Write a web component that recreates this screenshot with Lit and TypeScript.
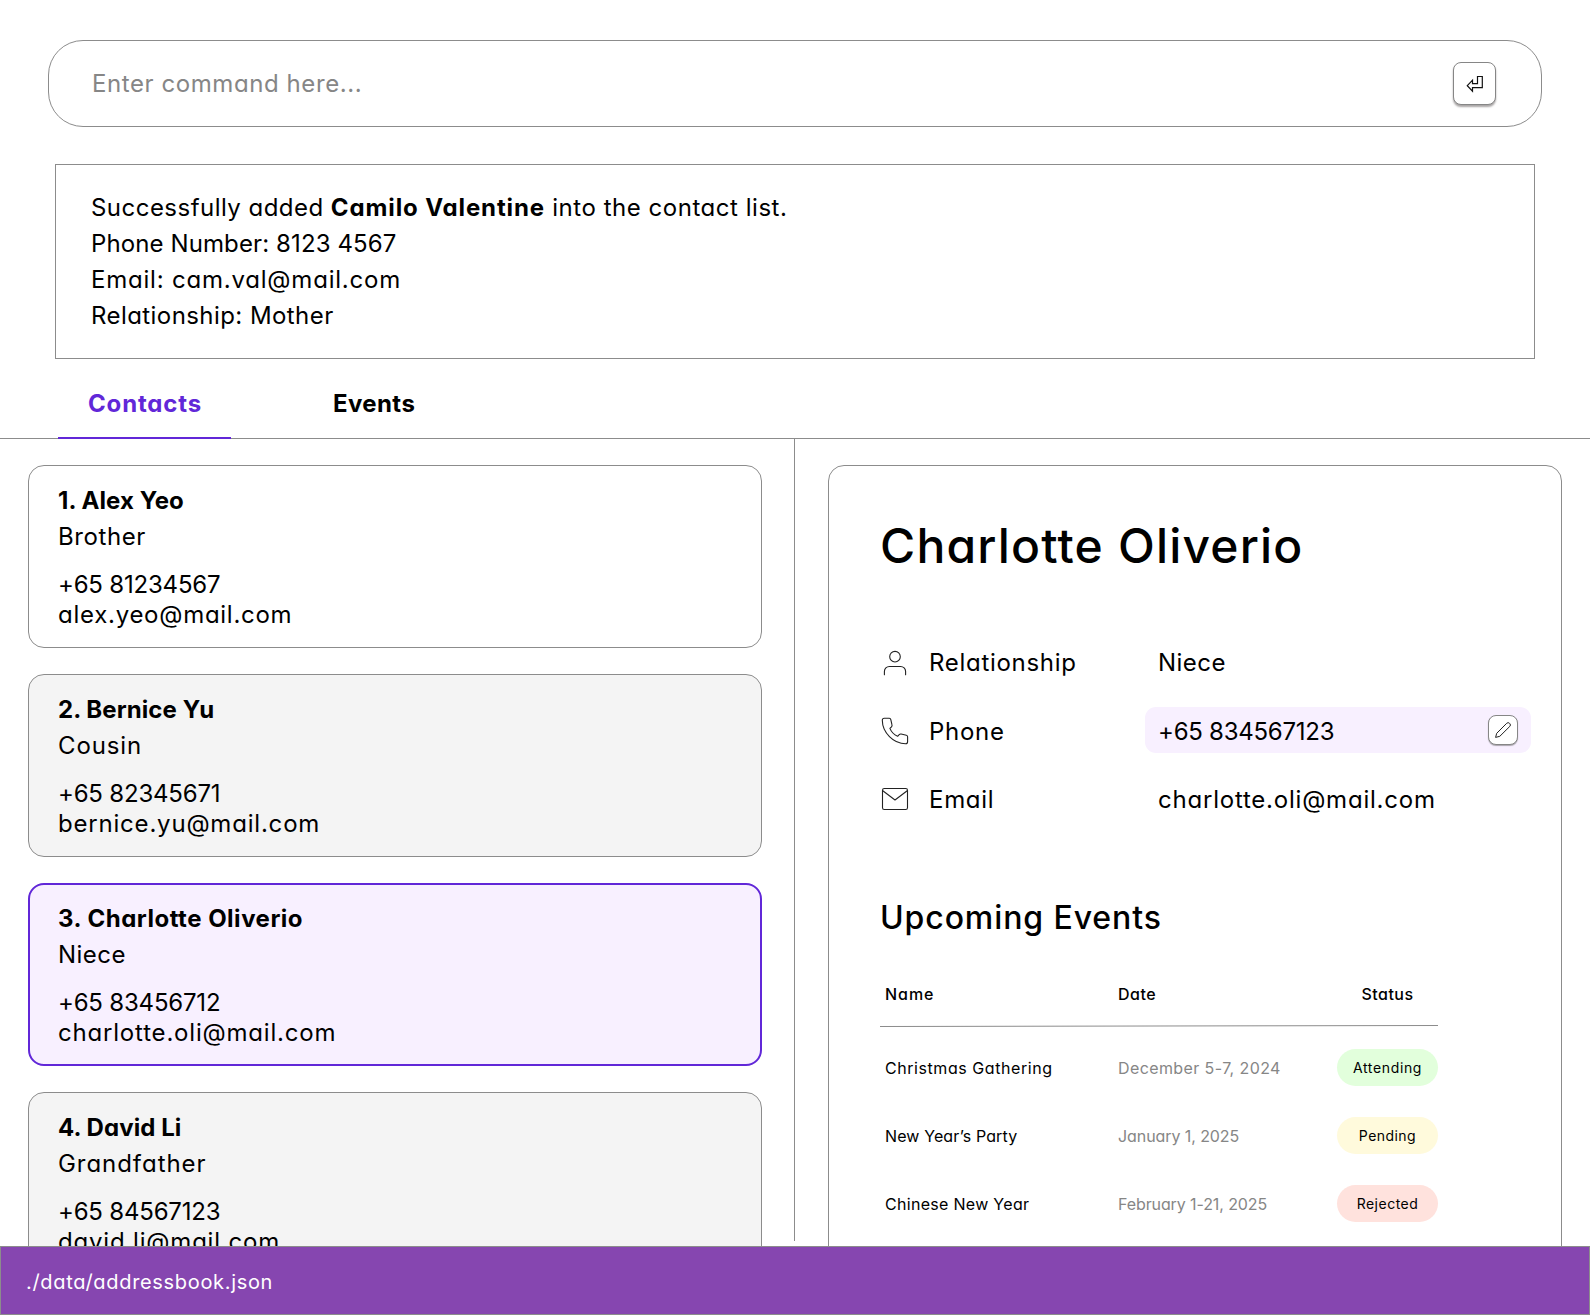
import { LitElement, html, css, svg, TemplateResult } from "lit";
import { customElement, property, state } from "lit/decorators.js";
import { classMap } from "lit/directives/class-map.js";
import { styleMap } from "lit/directives/style-map.js";

/** A run of text together with its letter-spacing in pixels. */
type Run = [text: string, tracking: number];

interface Contact {
  name: Run;
  relation: Run;
  phone: Run;
  email: Run;
}

interface EventRow {
  name: Run;
  date: Run;
  status: Run;
  tone: "attending" | "pending" | "rejected";
}

const run = ([text, tracking]: Run) =>
  html`<span style=${styleMap({ letterSpacing: `${tracking}px` })}>${text}</span>`;

const CONTACTS: Contact[] = [
  {
    name: ["1. Alex Yeo", 0.07],
    relation: ["Brother", 0.59],
    phone: ["+65 81234567", -0.2],
    email: ["alex.yeo@mail.com", 0.73],
  },
  {
    name: ["2. Bernice Yu", 0.08],
    relation: ["Cousin", 0.86],
    phone: ["+65 82345671", -0.2],
    email: ["bernice.yu@mail.com", 0.8],
  },
  {
    name: ["3. Charlotte Oliverio", 0.5],
    relation: ["Niece", 0.48],
    phone: ["+65 83456712", -0.2],
    email: ["charlotte.oli@mail.com", 0.81],
  },
  {
    name: ["4. David Li", 0.07],
    relation: ["Grandfather", 0.95],
    phone: ["+65 84567123", -0.2],
    email: ["david.li@mail.com", 0.8],
  },
];

const EVENTS: EventRow[] = [
  {
    name: ["Christmas Gathering", 0.56],
    date: ["December 5-7, 2024", 0.4],
    status: ["Attending", 0.65],
    tone: "attending",
  },
  {
    name: ["New Year’s Party", 0.12],
    date: ["January 1, 2025", -0.08],
    status: ["Pending", 0.45],
    tone: "pending",
  },
  {
    name: ["Chinese New Year", 0.3],
    date: ["February 1-21, 2025", -0.1],
    status: ["Rejected", 0.5],
    tone: "rejected",
  },
];

const ICONS: Record<string, TemplateResult> = {
  person: svg`
    <circle cx="16" cy="9.7" r="5.3"></circle>
    <path d="M5.4 27.8v-3.3a5 5 0 0 1 5-5h11.2a5 5 0 0 1 5 5v3.3"></path>`,
  phone: svg`
    <path d="M5.3 3.3h5a1.6 1.6 0 0 1 1.5 1.3l1.2 5.3a2 2 0 0 1-.5 1.9l-1.6 1.6c1.2 3 4.6 6.5 7.7 7.9l1.6-1.7a2 2 0 0 1 1.9-.6l5.2 1.2a1.7 1.7 0 0 1 1.3 1.6v5a2 2 0 0 1-2 2C14.5 28.8 3.4 17.6 3.3 5.3a2 2 0 0 1 2-2z"></path>`,
  mail: svg`
    <rect x="3.5" y="5.5" width="25" height="21" rx="1.8"></rect>
    <path d="M3.8 7.8 16 17l12.2-9.2"></path>`,
};

@customElement("line-icon")
class LineIcon extends LitElement {
  @property() name = "person";

  static styles = css`
    :host {
      display: block;
      width: 32px;
      height: 32px;
    }
    .glyph {
      display: block;
      fill: none;
      stroke: #222;
      stroke-width: 1.1;
      stroke-linecap: round;
      stroke-linejoin: round;
    }
  `;

  render() {
    return html`<svg class="glyph" width="32" height="32" viewBox="0 0 32 32">
      ${ICONS[this.name]}
    </svg>`;
  }
}

@customElement("contact-card")
class ContactCard extends LitElement {
  @property({ attribute: false }) contact!: Contact;
  @property({ type: Boolean }) selected = false;
  @property({ type: Boolean }) shaded = false;

  static styles = css`
    :host {
      display: block;
      flex: none;
    }
    .card {
      box-sizing: border-box;
      height: 183px;
      padding: 17px 29px 0;
      border: 1px solid #8c8c8c;
      border-radius: 16px;
      background: #fff;
    }
    .shaded {
      background: #f4f4f4;
    }
    .selected {
      padding: 16px 28px 0;
      border: 2px solid #6127d8;
      background: #f8f0ff;
    }
    .name,
    .relation {
      line-height: 36px;
    }
    .name {
      font-weight: 700;
    }
    .details {
      margin-top: 15px;
      line-height: 30px;
    }
  `;

  render() {
    const c = this.contact;
    return html`<div class=${classMap({ card: true, shaded: this.shaded, selected: this.selected })}>
      <div class="name">${run(c.name)}</div>
      <div class="relation">${run(c.relation)}</div>
      <div class="details">
        <div>${run(c.phone)}</div>
        <div>${run(c.email)}</div>
      </div>
    </div>`;
  }
}

@customElement("contact-details")
class ContactDetails extends LitElement {
  static styles = css`
    :host {
      display: block;
      box-sizing: border-box;
      height: 900px;
      padding: 44px 30px 0 51px;
      border: 1px solid #8c8c8c;
      border-radius: 16px;
    }
    .title {
      margin: 0;
      font-size: 48px;
      font-weight: 500;
      line-height: 72px;
    }
    .fields {
      display: grid;
      grid-template-rows: 47px 46px 46px;
      row-gap: 22px;
      margin-top: 57px;
    }
    .field {
      display: grid;
      grid-template-columns: 32px 217px 386px;
      align-items: center;
    }
    .icon {
      margin-left: -1px;
    }
    .label {
      padding-left: 17px;
    }
    .value {
      display: flex;
      align-items: center;
      justify-content: space-between;
      box-sizing: border-box;
      width: 386px;
      height: 46px;
      padding: 0 13px;
      margin-left: 16px;
      border-radius: 11px;
    }
    .editing {
      margin-top: -2px;
      padding-top: 2px;
      background: #f8f0ff;
    }
    .edit {
      box-sizing: border-box;
      width: 30px;
      height: 30px;
      margin: -2px 0 0;
      padding: 0;
      border: 1px solid #868686;
      border-radius: 8px;
      background: #fff;
      box-shadow: 0 1px 1px #a9a5ad;
    }
    .pencil {
      display: block;
      fill: none;
      stroke: #222;
      stroke-width: 1;
      stroke-linejoin: round;
    }
    .subtitle {
      margin: 72px 0 0;
      font-size: 32px;
      font-weight: 500;
      line-height: 48px;
    }
    .events {
      width: 558px;
      margin-top: 40px;
      font-size: 16px;
    }
    .row {
      display: grid;
      grid-template-columns: 233px 219px 101px;
      align-items: center;
      padding-left: 5px;
      height: 37px;
      margin-bottom: 31px;
    }
    .head {
      height: 24px;
      margin: 0;
      font-weight: 500;
    }
    .status {
      text-align: center;
    }
    .rule {
      display: block;
      margin: 19px 0 22px;
      stroke: #8c8c8c;
    }
    .date {
      color: #868686;
    }
    .pill {
      height: 37px;
      border-radius: 18.5px;
      font-size: 14px;
      line-height: 37px;
      text-align: center;
    }
    .attending {
      background: #e2ffdc;
    }
    .pending {
      background: #fffadc;
    }
    .rejected {
      background: #ffe2dd;
    }
  `;

  private field(icon: string, label: Run, value: Run, editing = false) {
    return html`<div class="field">
      <line-icon class="icon" name=${icon}></line-icon>
      <div class="label">${run(label)}</div>
      <div class=${classMap({ value: true, editing })}>
        ${run(value)}
        ${editing
          ? html`<button class="edit" aria-label="Edit">
              <svg class="pencil" width="28" height="28" viewBox="0 0 28 28">
                <path
                  d="M6.6 21.4 7.7 17.3 17.7 7.3a2 2 0 0 1 2.8 0l.3.3a2 2 0 0 1 0 2.8L10.8 20.3z"
                ></path>
              </svg>
            </button>`
          : ""}
      </div>
    </div>`;
  }

  render() {
    return html`
      <h1 class="title">${run(["Charlotte Oliverio", 1.19])}</h1>
      <div class="fields">
        ${this.field("person", ["Relationship", 0.7], ["Niece", 0.48])}
        ${this.field("phone", ["Phone", 0.7], ["+65 834567123", -0.25], true)}
        ${this.field("mail", ["Email", 0.7], ["charlotte.oli@mail.com", 0.78])}
      </div>
      <h2 class="subtitle">${run(["Upcoming Events", 0.9])}</h2>
      <div class="events">
        <div class="row head">
          <div>${run(["Name", 0.95])}</div>
          <div>${run(["Date", 0.5])}</div>
          <div class="status">${run(["Status", 0.45])}</div>
        </div>
        <svg class="rule" width="558" height="2" viewBox="0 0 558 2">
          <line x1="0" y1="1.5" x2="558" y2="0.5"></line>
        </svg>
        ${EVENTS.map(
          (e) => html`<div class="row">
            <div>${run(e.name)}</div>
            <div class="date">${run(e.date)}</div>
            <div class="pill ${e.tone}">${run(e.status)}</div>
          </div>`
        )}
      </div>
    `;
  }
}

@customElement("app-root")
class AppRoot extends LitElement {
  @state() private selected = 2;

  static styles = css`
    :host {
      display: flex;
      flex-direction: column;
      box-sizing: border-box;
      width: 1590px;
      height: 1315px;
      overflow: hidden;
      background: #fff;
      color: #000;
      font-family: Inter, "Open Sans", sans-serif;
      font-size: 24px;
      font-feature-settings: "cv11";
    }
    .command {
      display: flex;
      flex: none;
      align-items: center;
      justify-content: space-between;
      box-sizing: border-box;
      height: 87px;
      margin: 40px 48px 0;
      padding: 0 45px 0 43px;
      border: 1px solid #8c8c8c;
      border-radius: 35px;
      color: #868686;
    }
    .enter {
      box-sizing: border-box;
      width: 43px;
      height: 43px;
      padding: 0;
      border: 1px solid #868686;
      border-radius: 8px;
      background: #fff;
      box-shadow: 0 2px 2px #a8a5a5;
    }
    .arrow {
      display: block;
      fill: none;
      stroke: #111;
      stroke-width: 1.2;
    }
    .message {
      flex: none;
      box-sizing: border-box;
      height: 195px;
      margin: 37px 55px 0;
      padding: 25px 35px 0;
      border: 1px solid #8c8c8c;
      line-height: 36px;
      white-space: pre;
    }
    .strong {
      font-weight: 700;
    }
    .tabs {
      display: flex;
      flex: none;
      box-sizing: border-box;
      height: 80px;
      padding-left: 58px;
      border-bottom: 1px solid #8c8c8c;
      font-weight: 700;
    }
    .tab {
      box-sizing: border-box;
      width: 173px;
      height: 80px;
      margin-right: 72px;
      padding: 27px 0 0 30px;
      line-height: 36px;
    }
    .current {
      border-bottom: 2px solid #6127d8;
      color: #6127d8;
    }
    .body {
      display: grid;
      flex: 1;
      grid-template-columns: 794px 1px 795px;
      min-height: 0;
      overflow: hidden;
    }
    .list {
      display: flex;
      flex-direction: column;
      gap: 26px;
      padding: 26px 32px 0 28px;
    }
    .divider {
      height: 802px;
      background: #8c8c8c;
    }
    .pane {
      padding: 26px 28px 0 33px;
    }
    .footer {
      flex: none;
      box-sizing: border-box;
      height: 69px;
      padding-left: 25px;
      border: 1px solid #8c8c8c;
      background: #8646b0;
      color: #fff;
      font-size: 20px;
      line-height: 70px;
    }
  `;

  render() {
    return html`
      <div class="command">
        ${run(["Enter command here...", 0.58])}
        <button class="enter" aria-label="Run command">
          <svg class="arrow" width="41" height="41" viewBox="0 0 41 41">
            <path d="M13.3 22.7 18.5 17.2V20.6H23.5V13.5H28.3V24.7H18.5V28.2z"></path>
          </svg>
        </button>
      </div>
      <div class="message">${run(["Successfully added ", 0.47])}<span class="strong">${run(["Camilo Valentine", 0.88])}</span>${run([" into the contact list.", 0.53])}
${run(["Phone Number: 8123 4567", 0.11])}
${run(["Email: cam.val@mail.com", 0.79])}
${run(["Relationship: Mother", 0.43])}</div>
      <div class="tabs">
        <div class="tab current">${run(["Contacts", 0.84])}</div>
        <div class="tab">${run(["Events", 0.4])}</div>
      </div>
      <div class="body">
        <div class="list">
          ${CONTACTS.map(
            (c, i) => html`<contact-card
              .contact=${c}
              ?shaded=${i % 2 === 1}
              ?selected=${i === this.selected}
              @click=${() => (this.selected = i)}
            ></contact-card>`
          )}
        </div>
        <div class="divider"></div>
        <div class="pane"><contact-details></contact-details></div>
      </div>
      <div class="footer">${run(["./data/addressbook.json", 0.68])}</div>
    `;
  }
}
